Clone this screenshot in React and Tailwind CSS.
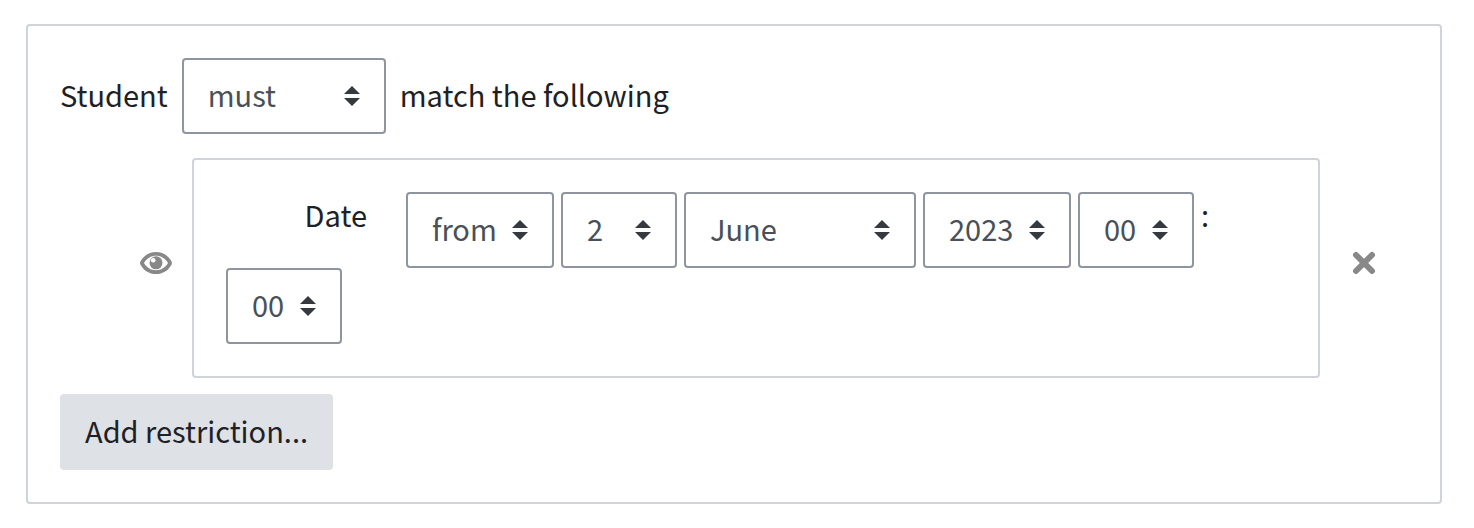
import React, { useState } from 'react';
import clsx from 'clsx';

const MONTHS = [
  'January', 'February', 'March', 'April', 'May', 'June',
  'July', 'August', 'September', 'October', 'November', 'December',
];

const pad = (n) => String(n).padStart(2, '0');
const DAYS = Array.from({ length: 31 }, (_, i) => String(i + 1));
const YEARS = Array.from({ length: 151 }, (_, i) => String(1900 + i));
const HOURS = Array.from({ length: 24 }, (_, i) => pad(i));
const MINUTES = Array.from({ length: 12 }, (_, i) => pad(i * 5));

const Select = ({ className, options, ...props }) => (
  <span className="relative inline-block">
    <select
      className={clsx(
        'block h-[76px] appearance-none rounded-[4px] border-2 border-[#8f959e] bg-white pb-1 pl-6 text-[#495057] focus:outline-none focus:border-[#0f6cbf]',
        className
      )}
      {...props}
    >
      {options.map((o) => (
        <option key={o} value={o}>{o}</option>
      ))}
    </select>
    <svg
      className="pointer-events-none absolute right-[26px] top-7 h-5 w-4"
      viewBox="0 0 4 5"
      fill="#343a40"
      aria-hidden="true"
    >
      <path d="M2 0L0 2h4zm0 5L0 3h4z" />
    </svg>
  </span>
);

const EyeIcon = () => (
  <svg className="block h-[22px] w-8" viewBox="0 0 32 22" aria-hidden="true">
    <path
      fill="#888"
      fillRule="evenodd"
      d="M.4 9.6C3.4 3.7 9.2 0 16 0s12.6 3.7 15.6 9.6c.4.9.4 1.9 0 2.8C28.6 18.3 22.8 22 16 22S3.400 18.300.4 12.400c-.5-.9-.5-1.900 0-2.800zM4 11c2.600 4.600 7 7.200 12 7.200S25.400 15.600 28 11C25.400 6.400 21 3.800 16 3.800S6.600 6.400 4 11z"
    />
    <circle cx="16" cy="10.800" r="6.500" fill="#888" />
    <circle cx="13.200" cy="8.300" r="2.300" fill="#fff" />
  </svg>
);

const CrossIcon = () => (
  <svg className="block h-6 w-6" viewBox="0 0 24 24" aria-hidden="true">
    <path
      fill="none"
      stroke="#888"
      strokeWidth="6"
      strokeLinecap="round"
      d="M4 4l16 16M20 4L4 20"
    />
  </svg>
);

export default function App() {
  const [match, setMatch] = useState('must');
  const [date, setDate] = useState({
    direction: 'from',
    day: '2',
    month: 'June',
    year: '2023',
    hour: '00',
    minute: '00',
  });

  const field = (name) => ({
    value: date[name],
    onChange: (e) => setDate({ ...date, [name]: e.target.value }),
  });

  return (
    <main className="bg-white py-6 pl-[26px] pr-8 font-['Noto_Sans_CJK_SC','Noto_Sans',sans-serif] text-[29px] leading-[44px] text-[#1d2125]">
      <section className="rounded-[4px] border-2 border-[#ced4da] p-8">
        <div className="flex items-center gap-3.5">
          <label htmlFor="match" className="pb-1">Student</label>
          <Select
            id="match"
            className="w-[204px]"
            options={['must', 'must not']}
            value={match}
            onChange={(e) => setMatch(e.target.value)}
          />
          <span className="pb-1">match the following</span>
        </div>

        <div className="mt-6 flex items-center pl-20 pr-8">
          <button type="button" className="mb-2.5 mr-5 shrink-0" aria-label="Displayed if student doesn't meet this condition">
            <EyeIcon />
          </button>

          <div className="flex min-w-0 flex-1 flex-wrap items-start gap-x-[7px] rounded-[4px] border-2 border-[#ced4da] p-8">
            <label htmlFor="direction" className="w-[173px] pr-8 text-right">Date</label>
            <Select id="direction" className="w-[148px]" options={['from', 'until']} {...field('direction')} />
            <Select aria-label="Day" className="w-[116px]" options={DAYS} {...field('day')} />
            <Select aria-label="Month" className="w-[232px]" options={MONTHS} {...field('month')} />
            <Select aria-label="Year" className="w-[148px]" options={YEARS} {...field('year')} />
            <Select aria-label="Hour" className="w-[116px]" options={HOURS} {...field('hour')} />
            <span>:</span>
            <Select aria-label="Minute" className="w-[116px]" options={MINUTES} {...field('minute')} />
          </div>

          <button type="button" className="mb-2.5 ml-8 shrink-0" aria-label="Delete">
            <CrossIcon />
          </button>
        </div>

        <button type="button" className="mt-4 block h-[76px] rounded-[4px] bg-[#dee2e6] px-[25px] pb-1">
          Add restriction...
        </button>
      </section>
    </main>
  );
}
